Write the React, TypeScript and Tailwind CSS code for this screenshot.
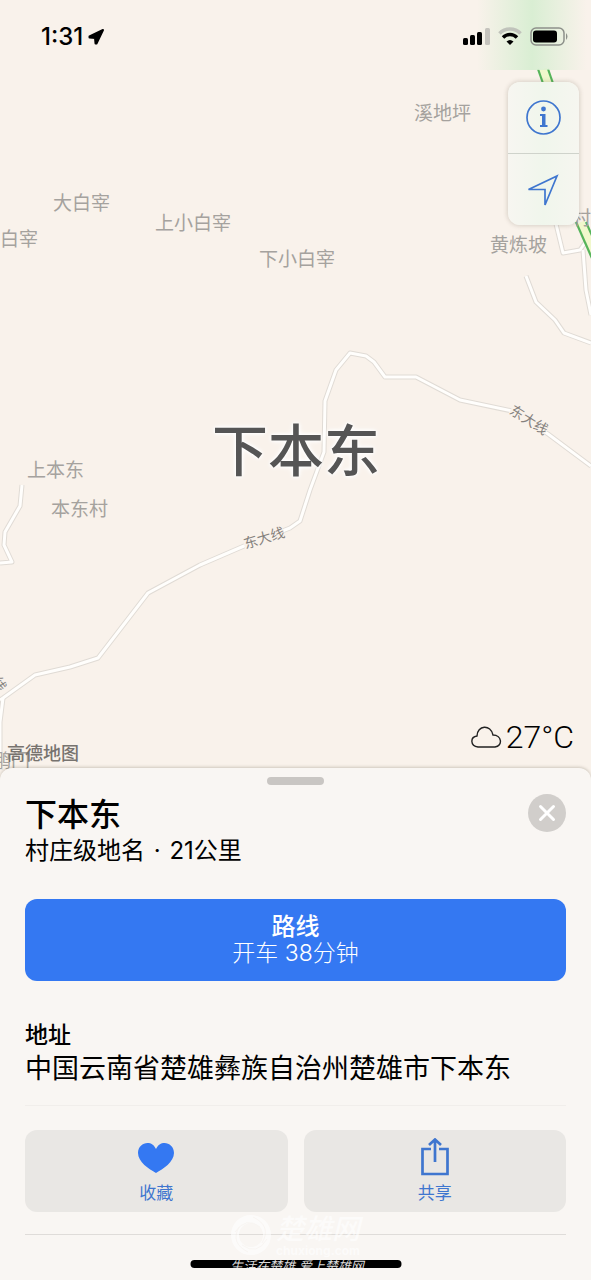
import type { ReactNode } from 'react';

interface Place {
    name: string;
    className: string;
}

const places: Place[] = [
    { name: '溪地坪', className: 'left-[414px] top-[100px]' },
    { name: '大白宰', className: 'left-[53px] top-[190px]' },
    { name: '上小白宰', className: 'left-[155px] top-[210px]' },
    { name: '白宰', className: 'left-0 top-[226px]' },
    { name: '下小白宰', className: 'left-[259px] top-[246px]' },
    { name: '黄炼坡', className: 'left-[490px] top-[232px]' },
    { name: '村', className: 'left-[572px] top-[205px]' },
    { name: '上本东', className: 'left-[27px] top-[457px]' },
    { name: '本东村', className: 'left-[51px] top-[496px]' },
    { name: '鹏门', className: '-left-2 top-[748px]' },
];

const roads = [
    'M0 700 L3 698 L35 675 L70 667 L98 658 L148 593 L200 565 L244 546 L290 528 L300 521 L310 490 L324 452 L325 401 L336 370 L350 353 L366 356 L374 362 L385 377 L416 377 L460 400 L512 411 L548 434 L591 466',
    'M0 563 L12 562 L4 545 L5 532 L20 506 L22 485',
    'M3 698 L0 722 L0 770',
    'M526 276 L536 302 L555 320 L564 333 L591 343',
    'M556 224 L563 253 L580 250 L587 240',
    'M583 250 L586 290 L591 315',
];

const highways = ['M538 69 L546 92', 'M576 222 L598 272'];

function MapCanvas() {
    return (
        <svg
            aria-hidden="true"
            className="absolute left-0 top-0 h-[800px] w-[600px]"
            viewBox="0 0 600 800"
            fill="none"
            strokeLinejoin="round"
        >
            {roads.map((d) => (
                <path key={d} d={d} stroke="#e0dbd5" strokeWidth="5" />
            ))}
            {roads.map((d) => (
                <path key={d} d={d} stroke="#fffefc" strokeWidth="3" />
            ))}
            {highways.map((d) => (
                <g key={d}>
                    <path d={d} stroke="#f1f8cc" strokeWidth="8" transform="translate(5 0)" />
                    <path d={d} stroke="#56b45a" strokeWidth="2.2" />
                    <path d={d} stroke="#56b45a" strokeWidth="2.2" transform="translate(10 0)" />
                </g>
            ))}
        </svg>
    );
}

function StatusBar() {
    return (
        <header className="relative flex h-[72px] items-center justify-between pl-[41px] pr-[22px] text-black">
            <div className="flex items-center gap-1 pt-px">
                <time className="text-2xl font-medium leading-6">1:31</time>
                <svg width="18" height="18" viewBox="0 0 18 18" aria-hidden="true">
                    <path d="M16 2 L9.5 15.5 L8.5 15.5 L8 10 L2.5 9.5 L2.5 8.5 Z" stroke="#000" strokeWidth="2" strokeLinejoin="round" />
                </svg>
            </div>
            <div className="flex items-center gap-2">
                <svg width="27" height="18" viewBox="0 0 27 18" aria-hidden="true">
                    <rect x="0" y="11" width="5" height="7" rx="1.5" />
                    <rect x="7" y="8" width="5" height="10" rx="1.5" />
                    <rect x="14" y="5" width="5" height="13" rx="1.5" />
                    <rect x="22" y="1" width="5" height="17" rx="1.5" fill="#c5c3bd" />
                </svg>
                <svg width="24" height="18" viewBox="0 0 24 18" fill="none" aria-hidden="true">
                    <path d="M1.5 6.5 C7 .5 17 .5 22.5 6.5" stroke="#c0c3bb" strokeWidth="3.5" />
                    <path d="M5 10.5 C9 6.5 15 6.5 19 10.5" stroke="#000" strokeWidth="3.5" />
                    <path d="M8.5 14.5 Q12 11.5 15.5 14.5 L12 18 Z" fill="#000" />
                </svg>
                <svg width="39" height="19" viewBox="0 0 39 19" aria-hidden="true">
                    <rect x="1" y="1" width="33" height="17" rx="5" fill="none" stroke="#8d908a" strokeWidth="1.5" />
                    <rect x="3" y="3.5" width="24" height="12" rx="3" />
                    <path d="M36 6 Q39 9.5 36 13 Z" fill="#8d908a" />
                </svg>
            </div>
        </header>
    );
}

function MapControls() {
    return (
        <div className="absolute right-3 top-[82px] flex w-[71px] flex-col divide-y divide-[#cfd3cb] rounded-xl bg-linear-to-r from-[#f7f6f1] via-[#f0f6ec] to-[#f6f6f0] shadow-[0_0_4px_1px_rgba(90,80,60,0.2)]">
            <button type="button" aria-label="信息" className="flex h-[72px] items-center justify-center">
                <svg width="36" height="36" viewBox="0 0 36 36" fill="none" aria-hidden="true">
                    <circle cx="17.5" cy="17.5" r="16.5" stroke="#3f76cf" strokeWidth="1.7" />
                    <circle cx="17.5" cy="9" r="2.4" fill="#3f76cf" />
                    <path d="M14 14 H19.5 V25 H21.5 V27 H14 V25 H16 V16 H14 Z" fill="#3f76cf" />
                </svg>
            </button>
            <button type="button" aria-label="定位" className="flex h-[71px] items-center justify-center">
                <svg width="34" height="34" viewBox="0 0 34 34" fill="none" aria-hidden="true">
                    <path d="M1.5 16.5 L30 3 L18 32 V16.5 Z" stroke="#3f76cf" strokeWidth="1.7" />
                </svg>
            </button>
        </div>
    );
}

function ActionButton({ label, children }: { label: string; children: ReactNode }) {
    return (
        <button
            type="button"
            className="flex h-[82px] flex-col items-center justify-between rounded-xl bg-[#e9e7e4] pb-[9px] pt-2 text-[#3f76cf]"
        >
            {children}
            <span className="text-[17px] leading-5">{label}</span>
        </button>
    );
}

/** Marca d'água do site */
function Watermark() {
    return (
        <div aria-hidden="true" className="absolute left-[230px] top-[445px] flex items-center gap-1 text-white opacity-60">
            <svg width="42" height="42" viewBox="0 0 42 42" fill="none">
                <circle cx="21" cy="21" r="16" stroke="#fff" strokeWidth="8" />
                <path d="M5 18 Q16 2 30 13 M23 3 Q42 12 32 29 M37 25 Q27 42 12 31 M18 38 Q0 29 9 13" stroke="#f8f5f2" strokeWidth="1" />
            </svg>
            <div className="flex flex-col">
                <span className="text-[28px] font-medium italic leading-8">楚雄网</span>
                <span className="text-xs font-bold leading-3">chuxiong.com</span>
            </div>
        </div>
    );
}

function PlaceSheet() {
    return (
        <section className="relative min-h-0 flex-1 overflow-hidden rounded-t-xl bg-[#f9f6f3] px-[25px] shadow-[0_-1px_3px_rgba(80,70,50,0.25)]">
            <div className="mx-auto mt-[9px] h-2 w-[57px] rounded-full bg-[#c9c6c3]" />

            <div className="mt-[9px] flex items-start justify-between">
                <div className="pt-px">
                    <h1 className="text-[32px] font-medium leading-10">下本东</h1>
                    <p className="text-2xl leading-8">
                        村庄级地名<span className="px-[2px]"> · </span>21公里
                    </p>
                </div>
                <button
                    type="button"
                    aria-label="关闭"
                    className="flex size-[38px] items-center justify-center rounded-full bg-[#d1cecb]"
                >
                    <svg width="18" height="18" viewBox="0 0 18 18" stroke="#fff" strokeWidth="3" strokeLinecap="round" aria-hidden="true">
                        <path d="M2.5 2.5 L15.5 15.5 M15.5 2.5 L2.5 15.5" />
                    </svg>
                </button>
            </div>

            <button
                type="button"
                className="mt-8 flex h-[82px] w-full flex-col items-center justify-center rounded-xl bg-[#3478f2] text-white"
            >
                <span className="text-2xl font-medium leading-[26px]">路线</span>
                <span className="text-[23px] font-light leading-[26px]">开车 38分钟</span>
            </button>

            <div className="mt-[38px] border-b border-[#f1eeeb] pb-[18px]">
                <h2 className="text-[23px] font-medium leading-8">地址</h2>
                <p className="text-[27px] leading-9">中国云南省楚雄彝族自治州楚雄市下本东</p>
            </div>

            <div className="mt-6 grid grid-cols-2 gap-4">
                <ActionButton label="收藏">
                    <svg width="38" height="38" viewBox="0 0 38 38" fill="#3478f2" aria-hidden="true">
                        <path d="M19 35 C12 31 1 24 1 15 C1 4 15 1 19 11 C23 1 37 4 37 15 C37 24 26 31 19 35 Z" />
                    </svg>
                </ActionButton>
                <ActionButton label="共享">
                    <svg width="30" height="38" viewBox="0 0 30 38" fill="none" stroke="#3f76cf" strokeWidth="2.7" aria-hidden="true">
                        <path d="M11 11 H2.5 V36 H27.5 V11 H19 M15 24 V2 M9 7 L15 1.5 L21 7" />
                    </svg>
                </ActionButton>
            </div>

            <div className="mt-[22px] border-t border-[#dfdcd9] pt-10">
                <p className="text-2xl leading-9 text-[#555]">更多地图 在其地图</p>
            </div>

            <Watermark />
        </section>
    );
}

export default function App() {
    return (
        <main className="relative flex h-screen flex-col overflow-hidden bg-[#f9f2eb] font-[Inter,'Noto_Sans_CJK_SC',sans-serif] text-black">
            <section aria-label="地图" className="relative h-[60vh] shrink-0">
                <MapCanvas />
                <div className="absolute right-1 top-0 h-[70px] w-[110px] bg-linear-to-r from-transparent via-[#d9eed3] to-transparent" />
                <StatusBar />

                {places.map((place) => (
                    <span
                        key={place.name}
                        className={`absolute whitespace-nowrap text-[19px] leading-7 text-[#a5a29e] ${place.className}`}
                    >
                        {place.name}
                    </span>
                ))}

                <strong className="absolute left-[212px] top-[411px] whitespace-nowrap text-[56px] font-medium leading-20 text-[#555] [text-shadow:0_0_3px_#fff,0_0_4px_#fff,0_0_6px_#fff]">
                    下本东
                </strong>
                <span className="absolute left-[243px] top-[528px] -rotate-17 bg-[#f9f2eb] text-sm leading-5 text-[#85817d]">
                    东大线
                </span>
                <span className="absolute left-[508px] top-[410px] rotate-32 bg-[#f9f2eb] text-sm leading-5 text-[#85817d]">
                    东大线
                </span>
                <span className="absolute -left-2 top-[674px] rotate-60 text-sm leading-5 text-[#85817d]">线</span>
                <span className="absolute bottom-1 left-[7px] text-lg font-medium leading-5 text-[#77736f]">
                    高德地图
                </span>

                <MapControls />

                <div className="absolute bottom-[13px] right-[17px] flex items-center gap-1">
                    <svg width="31" height="24" viewBox="0 0 31 24" fill="none" stroke="#222" strokeWidth="1.4" aria-hidden="true">
                        <path d="M7 22 H24 C32 21 31 10 22 10 C20 -1 6 0 6 11 C-1 12 -1 21 7 22 Z" />
                    </svg>
                    <span className="font-[Roboto] text-[32px] font-light leading-9">27°C</span>
                </div>
            </section>

            <PlaceSheet />

            <div className="absolute bottom-3 left-1/2 h-2 w-[211px] -translate-x-1/2 overflow-hidden rounded-full bg-black">
                <p className="whitespace-nowrap pl-10 text-[13px] italic leading-3 text-[#ddd]">生活在楚雄 爱上楚雄网</p>
            </div>
        </main>
    );
}
